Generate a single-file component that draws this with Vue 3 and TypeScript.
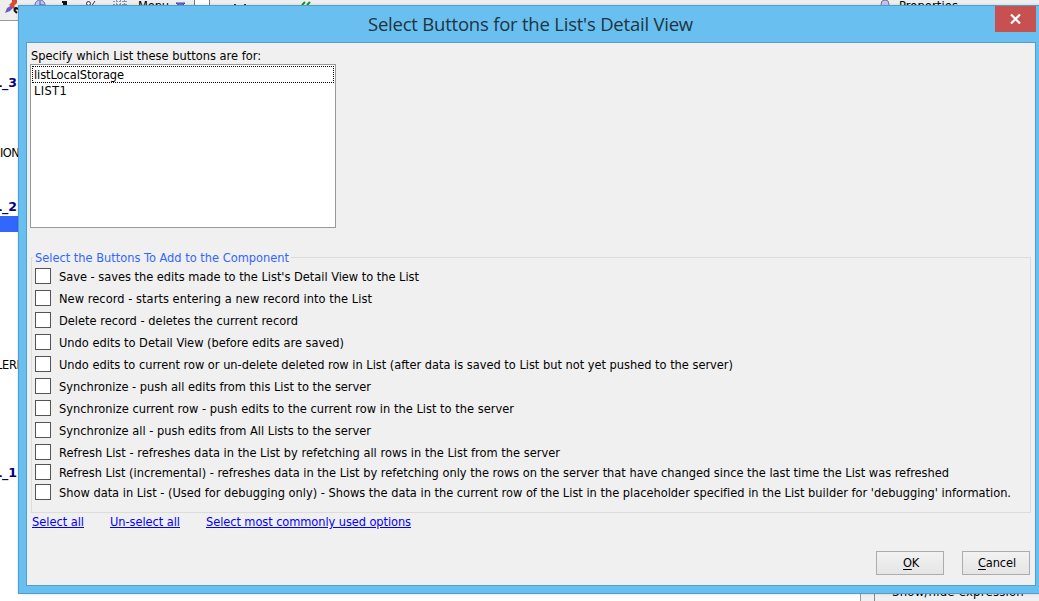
<script setup lang="ts">
import { ref } from 'vue'

interface Option { text: string; width: number; height: number }

const options: Option[] = [
  { text: "Save - saves the edits made to the List's Detail View to the List", width: 360, height: 22 },
  { text: 'New record - starts entering a new record into the List', width: 313, height: 22 },
  { text: 'Delete record - deletes the current record', width: 239, height: 22 },
  { text: 'Undo edits to Detail View (before edits are saved)', width: 285, height: 22 },
  { text: 'Undo edits to current row or un-delete deleted row in List (after data is saved to List but not yet pushed to the server)', width: 674, height: 22 },
  { text: 'Synchronize - push all edits from this List to the server', width: 312, height: 22 },
  { text: 'Synchronize current row - push edits to the current row in the List to the server', width: 455, height: 22 },
  { text: 'Synchronize all - push edits from All Lists to the server', width: 312, height: 22 },
  { text: 'Refresh List - refreshes data in the List by refetching all rows in the List from the server', width: 501, height: 20 },
  { text: 'Refresh List (incremental) - refreshes data in the List by refetching only the rows on the server that have changed since the last time the List was refreshed', width: 890, height: 20 },
  { text: "Show data in List - (Used for debugging only) - Shows the data in the current row of the List in the placeholder specified in the List builder for 'debugging' information.", width: 952, height: 20 },
]
const checked = ref<boolean[]>(options.map(() => false))
const setAll = (v: boolean) => { checked.value = options.map(() => v) }

// Tracks a label so that it occupies the given width.
const vFit = {
  mounted(el: HTMLElement, binding: { value: number }) {
    const natural = el.getBoundingClientRect().width
    const n = (el.textContent ?? '').length
    el.style.letterSpacing = `${(binding.value - natural) / n}px`
  },
}
</script>

<template>
  <div class="screen">
    <div class="toolbar">
      <svg class="tools" width="1039" height="21" viewBox="0 0 1039 21">
        <path d="M5 13L7 8L12 5L14 7L10 11Z" fill="#7057c8" />
        <path d="M9 5L12 2L12 0H17V3L14 6L16 8L14 9L8 4Z" fill="#d34e35" />
        <path d="M14 10l2-2 2 1M14 10l3 3" stroke="#111" stroke-width="2" fill="none" />
        <circle cx="40" cy="5" r="5" fill="#c6c8ef" stroke="#666aa0" />
        <path d="M40 1v4h4" stroke="#5552a8" fill="none" />
        <path d="M62 2h5M64 2v4M66 2v4" stroke="#111" stroke-width="2" />
        <circle cx="88.500" cy="3.500" r="2" stroke="#443050" fill="none" />
        <path d="M95 1l-4 6" stroke="#443050" fill="none" />
        <path d="M113 1.500h15M113 4.500h15M116.500 0v6M120.500 0v6M124.500 0v6" stroke="#8d92b0" stroke-dasharray="2 1" />
        <path d="M176 3h9l-4 4z" fill="#7771d6" stroke="#4b46a5" />
        <path d="M195 0h14v6h-14z" fill="#fff" />
        <path d="M194.500 0v6M209.500 0v6" stroke="#777" />
        <path d="M234 4.500h2M244 4.500h2" stroke="#333" />
        <path d="M302 5l3-3M307 5l3-3" stroke="#159a20" stroke-width="2" />
        <circle cx="885" cy="4" r="4" fill="#c9c2ef" stroke="#77738d" />
      </svg>
      <span class="menu-word" v-fit="31">Menu</span>
      <span class="properties-word" v-fit="59">Properties</span>
    </div>
    <div class="tree">
      <b class="node n3">L_3</b>
      <span class="node ion">ION</span>
      <b class="node n2">L_2</b>
      <div class="selection"></div>
      <span class="node leri">LERI</span>
      <b class="node n1">L_1</b>
    </div>
    <div class="under"><div><span v-fit="132">Show/hide expression</span></div></div>

    <section class="dialog">
      <header class="titlebar">
        <h1><span v-fit="325">Select Buttons for the List's Detail View</span></h1>
        <button class="close" aria-label="Close">
          <svg width="11" height="10" viewBox="0 0 11 10"><path d="M1 .5L10 9.500M10 .5L1 9.500" stroke="#fff" stroke-width="2.200" /></svg>
        </button>
      </header>
      <main class="content">
        <div class="prompt"><span v-fit="230">Specify which List these buttons are for:</span></div>
        <div class="listbox">
          <div class="item focused"><span v-fit="90">listLocalStorage</span></div>
          <div class="item"><span v-fit="33">LIST1</span></div>
        </div>
        <div class="group">
          <div class="legend"><span v-fit="254">Select the Buttons To Add to the Component</span></div>
          <div
            v-for="(o, i) in options"
            :key="i"
            class="option"
            :style="{ height: o.height + 'px' }"
            @click="checked[i] = !checked[i]"
          >
            <i class="box"><svg v-if="checked[i]" width="12" height="12"><path d="M2 6l3 3 5-7" stroke="#222" stroke-width="2" fill="none" /></svg></i>
            <span v-fit="o.width">{{ o.text }}</span>
          </div>
        </div>
        <nav class="links">
          <a v-fit="52" @click="setAll(true)">Select all</a>
          <a v-fit="70" @click="setAll(false)">Un-select all</a>
          <a v-fit="205">Select most commonly used options</a>
        </nav>
        <footer class="actions">
          <button><span v-fit="16"><u>O</u>K</span></button>
          <button><span v-fit="38"><u>C</u>ancel</span></button>
        </footer>
      </main>
    </section>
  </div>
</template>

<style>
body { margin: 0; overflow: hidden; }
</style>

<style scoped>
* { box-sizing: border-box; }
.screen {
  position: relative; width: 1039px; height: 601px; overflow: hidden; background: #fff;
  font: 12.7px/16px "DejaVu Sans Condensed", "DejaVu Sans", sans-serif; color: #000; white-space: nowrap;
}
.toolbar { position: relative; height: 21px; background: #eee; border-bottom: 1px solid #999; }
.tools { display: block; }
.menu-word { position: absolute; left: 138px; top: -2px; }
.properties-word { position: absolute; left: 899px; top: -2px; }
.tree { width: 18px; height: 580px; display: flex; flex-direction: column; }
.node { height: 16px; width: 30px; flex: none; display: block; }
b.node { color: #00007c; font-family: "DejaVu Sans", sans-serif; font-size: 12.5px; margin-left: -6px; }
.n3 { margin-top: 54px; }
.ion { margin-top: 54px; letter-spacing: -.6px; }
.n2 { margin-top: 38px; }
.selection { height: 16px; margin-top: 1px; background: #3366fb; flex: none; }
.leri { margin-top: 125px; margin-left: -4px; letter-spacing: -.3px; }
.n1 { margin-top: 92px; }
.under {
  position: absolute; left: 860px; top: 585px; width: 179px; height: 16px; background: #f0f0f0;
  border-left: 1px solid #999; padding-left: 13px; display: flex;
}
.under div { border-left: 1px solid #888; padding-left: 17px; line-height: 14px; font-size: 13px; }
.dialog {
  position: absolute; left: 18px; top: 5px; width: 1024px; height: 589px;
  background: #69c0f0; border: 1px solid #4b9fce; box-shadow: 0 0 3px #0002;
}
.titlebar { height: 36px; display: flex; margin-right: 5px; }
h1 {
  flex: 1; margin: 0; padding: 1px 0 0 349px; font: 18.5px/34px "Open Sans", "Noto Sans", sans-serif; color: #20343f;
}
.close {
  width: 41px; height: 26px; padding: 0; border: 0; background: #c75050;
  display: flex; align-items: center; justify-content: center;
}
.content {
  margin-left: 7px; width: 1010px; height: 544px; border: 1px solid #4f9fcc;
  background: #f0f0f0; display: flex; flex-direction: column;
}
.prompt { margin: 5px 0 0 4px; height: 16px; }
.listbox { width: 306px; height: 164px; margin: 0 0 0 3px; border: 1px solid #999; background: #fff; padding: 1px; flex: none; }
.item { height: 16px; line-height: 16px; padding-left: 2px; }
.item.focused { outline: 1px dotted #000; outline-offset: -1px; height: 17px; line-height: 18px; }
.group { position: relative; margin: 29px 0 0 4px; width: 1000px; height: 256px; border: 1px solid #dcdcdc; flex: none; }
.legend { height: 16px; line-height: 18px; margin: -9px 0 3px 1px; width: 258px; padding-left: 2px; background: #f0f0f0; color: #3366ff; }
.option { display: flex; padding-left: 3px; align-items: flex-start; }
.option span { margin-left: 8px; line-height: 18px; }
.box { width: 16px; height: 16px; border: 1px solid #555; background: #fff; flex: none; display: block; }
.box svg { display: block; }
.links { display: flex; gap: 26px; margin: 0 0 0 5px; height: 18px; color: #00f; flex: none; }
.links a { text-decoration: underline; line-height: 18px; cursor: pointer; }
.actions { display: flex; justify-content: flex-end; gap: 18px; margin: 20px 5px 0 0; }
.actions button {
  width: 68px; height: 24px; padding: 0 0 0 2px; color: #000; font: inherit;
  border: 1px solid #acacac; background: linear-gradient(#f2f2f2, #e5e5e5); text-align: center;
}
.actions u { text-underline-offset: 2px; }
</style>
